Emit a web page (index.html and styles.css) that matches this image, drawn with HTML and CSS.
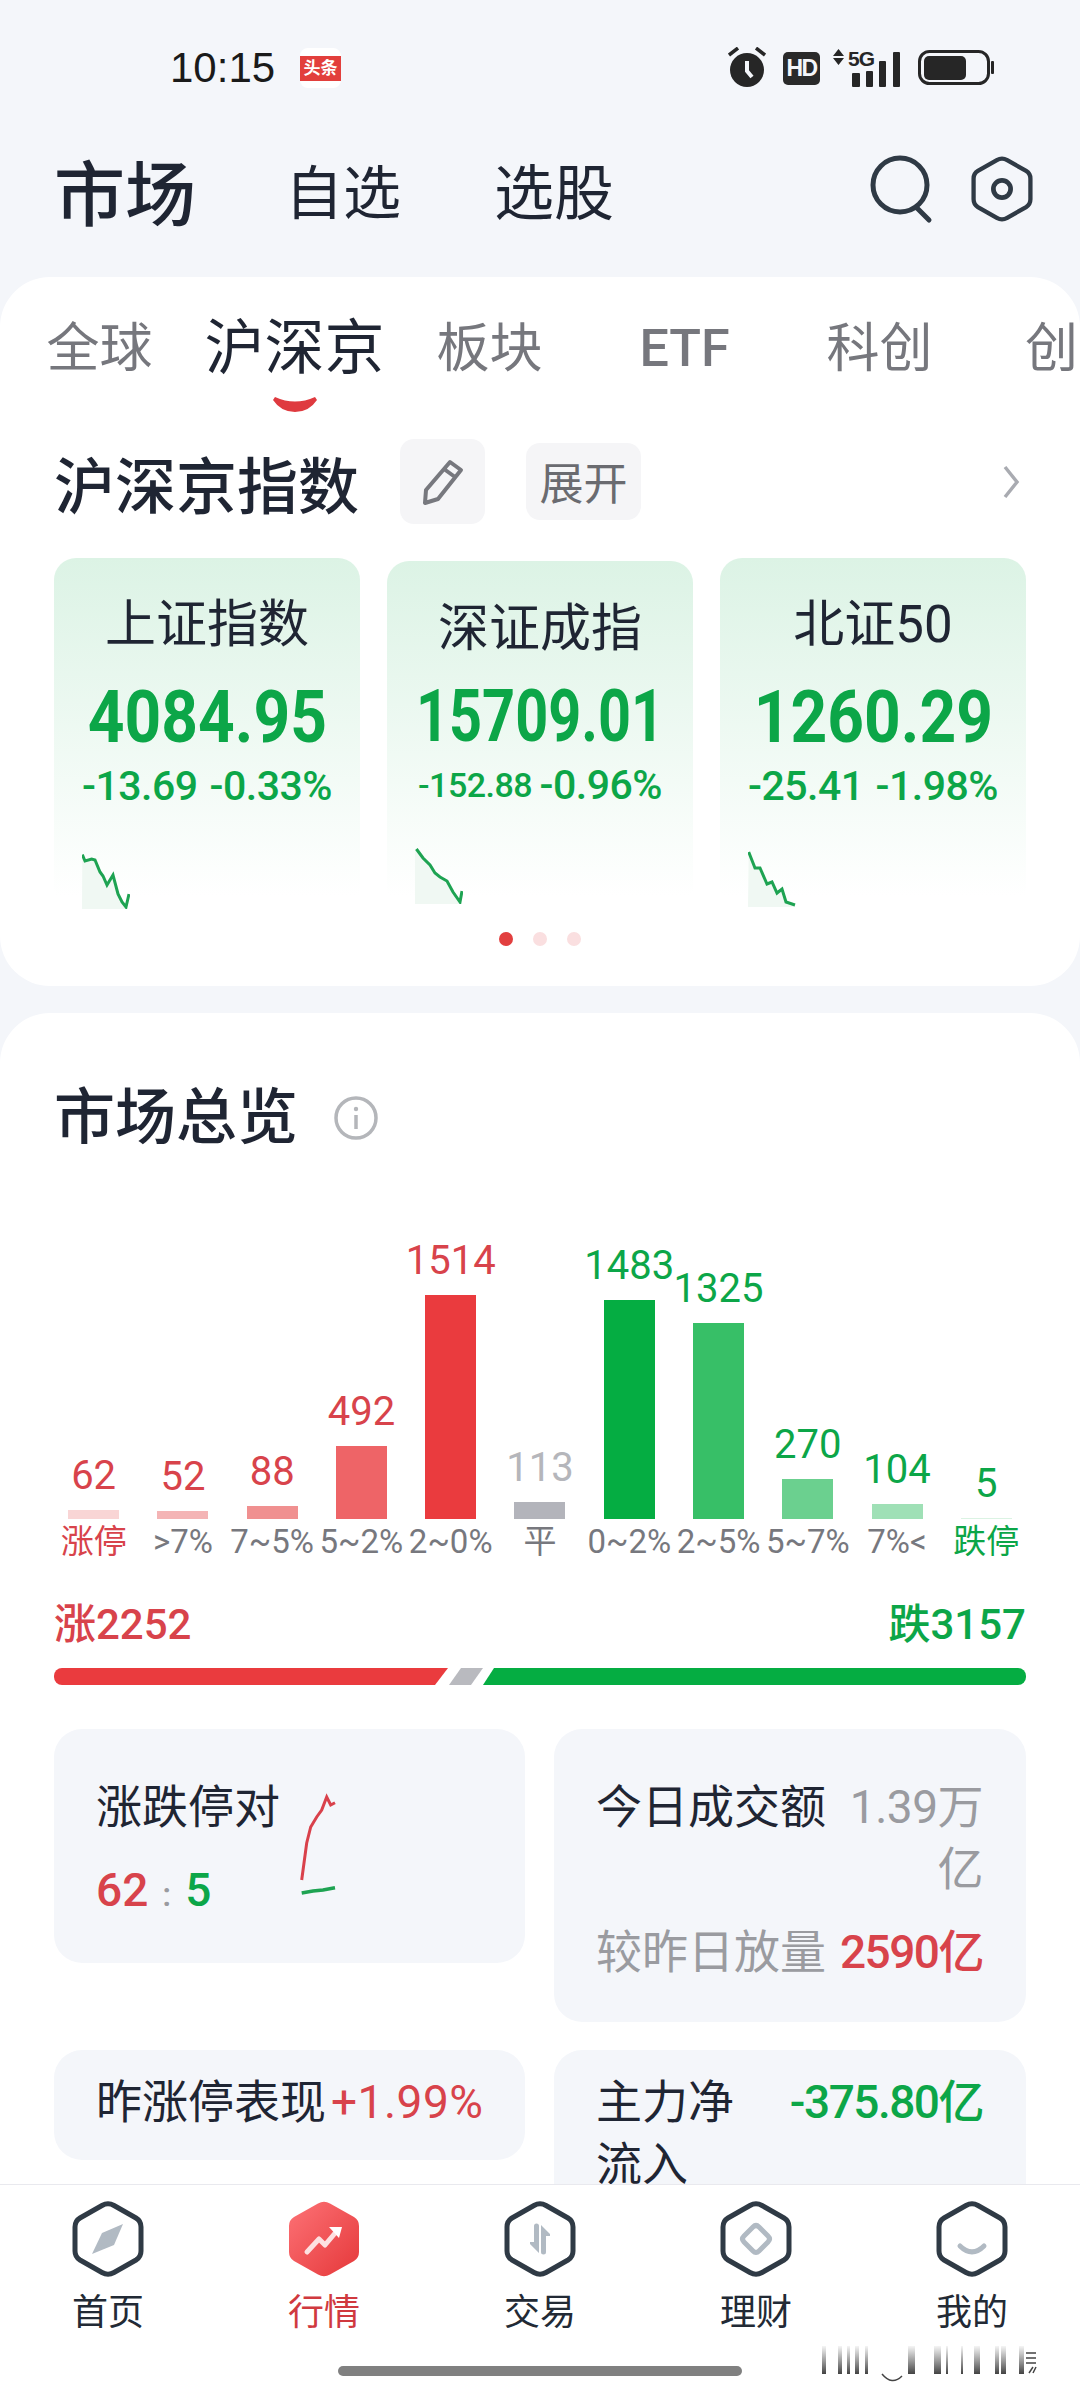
FILE: index.html
```html
<!DOCTYPE html>
<html lang="zh-CN">
<head>
    <meta charset="UTF-8">
    <meta name="viewport" content="width=device-width, initial-scale=1.0">
    <title>市场</title>
    <link rel="stylesheet" href="styles.css">
</head>
<body>
    <svg class="defs" width="0" height="0">
        <symbol id="hex" viewBox="0 0 72 78">
            <path d="M30 5.5Q36 2 42 5.5L64 18Q69 21 69 27V51Q69 57 64 60L42 72.5Q36 76 30 72.5L8 60Q3 57 3 51V27Q3 21 8 18Z" fill="none" stroke="#2f3a45" stroke-width="5"/>
        </symbol>
        <linearGradient id="hot" x1="0" y1="0" x2="1" y2="1">
            <stop offset="0" stop-color="#fd7276"/>
            <stop offset="1" stop-color="#e5383a"/>
        </linearGradient>
        <linearGradient id="fade" x1="0" y1="0" x2="0" y2="1">
            <stop offset="0" stop-color="#333" stop-opacity="0.05"/>
            <stop offset="1" stop-color="#222" stop-opacity="0.85"/>
        </linearGradient>
    </svg>

    <div class="page">
        <div class="scroll">
            <div class="status">
                <span class="time">10:15</span>
                <span class="toutiao"><span class="toutiao-mark">头条</span></span>
                <div class="status-icons">
                    <svg class="ic-alarm" width="38" height="40" viewBox="0 0 38 40">
                        <circle cx="19" cy="23" r="17" fill="#262626"/>
                        <path d="M19 14V24L24 30" fill="none" stroke="#f4f6fa" stroke-width="4"/>
                        <path d="M10 1L1 8M28 1L37 8" stroke="#262626" stroke-width="3.5"/>
                    </svg>
                    <span class="ic-hd">HD</span>
                    <svg class="ic-signal" width="67" height="38" viewBox="0 0 67 38">
                        <path d="M0 7L5.5 0L11 7ZM0 9H11L5.5 16Z" fill="#262626"/>
                        <text x="15" y="17" class="ic-5g">5G</text>
                        <rect x="19" y="24" width="8" height="14" rx="1" fill="#262626"/>
                        <rect x="33" y="22" width="7" height="16" rx="1" fill="#262626"/>
                        <rect x="46" y="12" width="7" height="26" rx="1" fill="#262626"/>
                        <rect x="60" y="3" width="7" height="35" rx="1" fill="#262626"/>
                    </svg>
                    <svg class="ic-battery" width="76" height="36" viewBox="0 0 76 36">
                        <rect x="1.5" y="1.5" width="69" height="32" rx="10" fill="none" stroke="#262626" stroke-width="3"/>
                        <rect x="6" y="6" width="42" height="24" rx="5" fill="#262626"/>
                        <rect x="73" y="11" width="3" height="13" rx="1" fill="#262626"/>
                    </svg>
                </div>
            </div>

            <div class="header">
                <span class="header-main">市场</span>
                <span class="header-link">自选</span>
                <span class="header-link header-link-last">选股</span>
                <svg class="ic-search" width="64" height="70" viewBox="0 0 64 70">
                    <circle cx="31" cy="31" r="27" fill="none" stroke="#2f3a45" stroke-width="5"/>
                    <path d="M47 53L60 66" stroke="#2f3a45" stroke-width="5" stroke-linecap="round"/>
                </svg>
                <svg class="ic-gear" width="62" height="68" viewBox="0 0 72 78">
                    <use href="#hex"/>
                    <circle cx="36" cy="39" r="10" fill="none" stroke="#2f3a45" stroke-width="5.5"/>
                </svg>
            </div>

            <div class="card card-index">
                <div class="tabs">
                    <div class="tab">全球</div>
                    <div class="tab tab-active">沪深京
                        <svg class="tab-smile" width="44" height="15" viewBox="0 0 44 15">
                            <path d="M2 0Q22 9 42 0L44 3Q36 15 22 15Q8 15 0 3Z" fill="#df3a3f"/>
                        </svg>
                    </div>
                    <div class="tab">板块</div>
                    <div class="tab tab-latin">ETF</div>
                    <div class="tab">科创</div>
                    <div class="tab tab-edge">创</div>
                </div>

                <div class="section-head">
                    <span class="section-title">沪深京指数</span>
                    <span class="btn-edit">
                        <svg width="46" height="48" viewBox="0 0 46 48">
                            <path d="M30 4L41 12L18 41L5 45L6 32Z M24 11L35 19" fill="none" stroke="#77787e" stroke-width="4" stroke-linejoin="round"/>
                        </svg>
                    </span>
                    <span class="btn-expand">展开</span>
                    <svg class="chevron" width="18" height="34" viewBox="0 0 18 34">
                        <path d="M3 2L15 17L3 32" fill="none" stroke="#a9abb1" stroke-width="3.5"/>
                    </svg>
                </div>

                <div class="index-row">
                    <div class="index-card">
                        <div class="index-name">上证指数</div>
                        <div class="index-value">4084.95</div>
                        <div class="index-change"><span>-13.69</span><span>-0.33%</span></div>
                        <svg class="index-spark" width="48" height="58" viewBox="0 0 48 58">
                            <path d="M0.3 3.7L3 10L9.7 8L13 9L18 21L21 25L25 34L31 24L36 43L40 51L44 56V58H0Z" fill="#f0f8f3"/>
                            <path d="M0.3 3.7L3 10L9.7 8L13 9L18 21L21 25L25 34L31 24L36 43L40 51L44 56L47 43" fill="none" stroke="#1ea352" stroke-width="3"/>
                        </svg>
                    </div>
                    <div class="index-card index-card-mid">
                        <div class="index-name">深证成指</div>
                        <div class="index-value">15709.01</div>
                        <div class="index-change index-change-sm"><span>-152.88</span><span>-0.96%</span></div>
                        <svg class="index-spark" width="48" height="56" viewBox="0 0 48 56">
                            <path d="M1.4 1L8 10L15 17L20 25L25 29L32 33L38 44L45 54V56H0V1Z" fill="#f0f8f3"/>
                            <path d="M1.4 1L8 10L15 17L20 25L25 29L32 33L38 44L45 54L47 43" fill="none" stroke="#1ea352" stroke-width="3"/>
                        </svg>
                    </div>
                    <div class="index-card">
                        <div class="index-name">北证50</div>
                        <div class="index-value">1260.29</div>
                        <div class="index-change"><span>-25.41</span><span>-1.98%</span></div>
                        <svg class="index-spark" width="48" height="56" viewBox="0 0 48 56">
                            <path d="M0.7 1L7 17L12 17L19 33L24 31L29 42L34 38L38 51L47 54V56H0Z" fill="#f0f8f3"/>
                            <path d="M0.7 1L7 17L12 17L19 33L24 31L29 42L34 38L38 51L47 54" fill="none" stroke="#1ea352" stroke-width="3"/>
                        </svg>
                    </div>
                </div>

                <div class="dots">
                    <span class="dot dot-on"></span>
                    <span class="dot"></span>
                    <span class="dot"></span>
                </div>
            </div>

            <div class="card card-market">
                <div class="market-head">
                    <span class="section-title">市场总览</span>
                    <svg class="ic-info" width="44" height="44" viewBox="0 0 44 44">
                        <circle cx="22" cy="22" r="20" fill="none" stroke="#b4b6ba" stroke-width="3.5"/>
                        <path d="M22 19V33" stroke="#b4b6ba" stroke-width="3.5"/>
                        <circle cx="22" cy="13" r="2.2" fill="#b4b6ba"/>
                    </svg>
                </div>

                <div class="chart">
                    <div class="col up"><span class="col-num">62</span><span class="bar bar-u1" style="height: 9px"></span><span class="col-label">涨停</span></div>
                    <div class="col up"><span class="col-num">52</span><span class="bar bar-u2" style="height: 8px"></span><span class="col-label col-label-gray">&gt;7%</span></div>
                    <div class="col up"><span class="col-num">88</span><span class="bar bar-u3" style="height: 13px"></span><span class="col-label col-label-gray">7~5%</span></div>
                    <div class="col up"><span class="col-num">492</span><span class="bar bar-u4" style="height: 73px"></span><span class="col-label col-label-gray">5~2%</span></div>
                    <div class="col up"><span class="col-num">1514</span><span class="bar bar-u5" style="height: 224px"></span><span class="col-label col-label-gray">2~0%</span></div>
                    <div class="col flat"><span class="col-num">113</span><span class="bar bar-flat" style="height: 17px"></span><span class="col-label col-label-gray">平</span></div>
                    <div class="col down"><span class="col-num">1483</span><span class="bar bar-d1" style="height: 219px"></span><span class="col-label col-label-gray">0~2%</span></div>
                    <div class="col down"><span class="col-num">1325</span><span class="bar bar-d2" style="height: 196px"></span><span class="col-label col-label-gray">2~5%</span></div>
                    <div class="col down"><span class="col-num">270</span><span class="bar bar-d3" style="height: 40px"></span><span class="col-label col-label-gray">5~7%</span></div>
                    <div class="col down"><span class="col-num">104</span><span class="bar bar-d4" style="height: 15px"></span><span class="col-label col-label-gray">7%&lt;</span></div>
                    <div class="col down"><span class="col-num">5</span><span class="bar bar-d5" style="height: 1px"></span><span class="col-label">跌停</span></div>
                </div>

                <div class="totals">
                    <span class="red">涨2252</span>
                    <span class="green">跌3157</span>
                </div>
                <div class="ratio">
                    <span class="ratio-up"></span>
                    <span class="ratio-flat"></span>
                    <span class="ratio-down"></span>
                </div>

                <div class="stats">
                    <div class="stat stat-limit">
                        <div class="stat-text">
                            <div class="stat-line">涨跌停对</div>
                            <div class="stat-line stat-line-gap stat-pair"><span class="red">62</span><span class="sep">:</span><span class="green">5</span></div>
                        </div>
                        <svg class="limit-spark" width="40" height="106" viewBox="0 0 40 106">
                            <path d="M3.7 90L6 73L8.7 53L12.7 37L18.7 27L23.7 20L28.7 7L32.7 15L37 12.7" fill="none" stroke="#d9414b" stroke-width="3"/>
                            <path d="M3.7 103L15 101L25 100L37 97.7" fill="none" stroke="#1ea352" stroke-width="3.5"/>
                        </svg>
                    </div>
                    <div class="stat">
                        <div class="stat-row">
                            <span class="stat-label stat-label-fixed">今日成交额</span>
                            <span class="stat-value gray">1.39万亿</span>
                        </div>
                        <div class="stat-row stat-line-gap">
                            <span class="stat-label stat-label-fixed gray">较昨日放量</span>
                            <span class="stat-value stat-strong red">2590亿</span>
                        </div>
                    </div>
                    <div class="stat stat-short">
                        <div class="stat-row">
                            <span class="stat-label stat-label-fixed">昨涨停表现</span>
                            <span class="stat-gain red">+1.99%</span>
                        </div>
                    </div>
                    <div class="stat stat-flow">
                        <div class="stat-row">
                            <span class="stat-label stat-label-wrap">主力净流入</span>
                            <span class="stat-value stat-strong green">-375.80亿</span>
                        </div>
                    </div>
                </div>
            </div>
        </div>

        <div class="nav">
            <div class="nav-items">
                <div class="nav-item">
                    <svg width="72" height="78" viewBox="0 0 72 78">
                        <use href="#hex"/>
                        <path d="M51 24L42 45L20 54L30 33Z" fill="#b1bac3"/>
                    </svg>
                    <span>首页</span>
                </div>
                <div class="nav-item nav-item-on">
                    <svg width="72" height="78" viewBox="0 0 72 78">
                        <path d="M30 3.5Q36 0 42 3.5L66 17Q71 20 71 26V52Q71 58 66 61L42 74.5Q36 78 30 74.5L6 61Q1 58 1 52V26Q1 20 6 17Z" fill="url(#hot)"/>
                        <path d="M19 52L31 39L37 45L48 32" fill="none" stroke="#fde1e1" stroke-width="5" stroke-linecap="round" stroke-linejoin="round"/>
                        <path d="M41 27H54L51 38Z" fill="#fff"/>
                    </svg>
                    <span>行情</span>
                </div>
                <div class="nav-item">
                    <svg width="72" height="78" viewBox="0 0 72 78">
                        <use href="#hex"/>
                        <path d="M30 26a2.5 2.5 0 0 1 5 0V53L26 44V42H30Z" fill="#b1bac3"/>
                        <path d="M42 52a2.5 2.5 0 0 1 -5 0V25L46 34V36H42Z" fill="#b1bac3"/>
                    </svg>
                    <span>交易</span>
                </div>
                <div class="nav-item">
                    <svg width="72" height="78" viewBox="0 0 72 78">
                        <use href="#hex"/>
                        <path d="M33 27Q36 24 39 27L48 36Q51 39 48 42L39 51Q36 54 33 51L24 42Q21 39 24 36Z" fill="none" stroke="#b1bac3" stroke-width="5"/>
                    </svg>
                    <span>理财</span>
                </div>
                <div class="nav-item">
                    <svg width="72" height="78" viewBox="0 0 72 78">
                        <use href="#hex"/>
                        <path d="M24 46Q36 58 48 46" fill="none" stroke="#b1bac3" stroke-width="5" stroke-linecap="round"/>
                    </svg>
                    <span>我的</span>
                </div>
            </div>
            <div class="home-bar"></div>

            <!-- watermark smear, bottom right -->
            <svg class="smear" width="220" height="36" viewBox="0 0 220 36">
                <g fill="url(#fade)">
                    <rect x="2" y="0" width="4" height="28"/>
                    <rect x="18" y="0" width="4" height="28"/>
                    <rect x="27" y="0" width="3" height="28"/>
                    <rect x="35" y="0" width="4" height="28"/>
                    <rect x="45" y="0" width="3" height="28"/>
                    <rect x="88" y="0" width="7" height="28"/>
                    <rect x="114" y="0" width="7" height="28"/>
                    <rect x="126" y="0" width="2" height="28"/>
                    <rect x="141" y="0" width="2" height="28"/>
                    <rect x="154" y="0" width="6" height="28"/>
                    <rect x="175" y="0" width="4" height="28"/>
                    <rect x="181" y="0" width="5" height="28"/>
                    <rect x="199" y="0" width="5" height="28"/>
                </g>
                <path d="M62 28Q72 40 82 30" fill="none" stroke="#444" stroke-width="1.5"/>
                <path d="M206 7H216M206 12H216M206 17H216M209 27L213 21M213 27L216 21" fill="none" stroke="#444" stroke-width="1.5"/>
            </svg>
        </div>
    </div>
</body>
</html>
```
FILE: styles.css
```css
:root {
    --bg: #f4f6fa;
    --ink: #1f2533;
    --tab-gray: #76777d;
    --red: #d8434b;
    --green: #0ca648;
    --soft: #9a9ba0;
}

* {
    box-sizing: border-box;
}

body {
    margin: 0;
    font-family: Roboto, "Noto Sans CJK SC", sans-serif;
    color: var(--ink);
    background: var(--bg);
}

.defs {
    display: block;
    height: 0;
}

.page {
    width: 1080px;
    height: 2400px;
    display: flex;
    flex-direction: column;
    overflow: hidden;
}

.scroll {
    flex: 1;
    min-height: 0;
    overflow: hidden;
}

.red { color: var(--red); }
.green { color: var(--green); }
.gray { color: var(--soft); }

/* status bar */
.status {
    height: 136px;
    padding-left: 170px;
    display: flex;
    align-items: center;
}

.time {
    font-size: 42px;
    color: #1a1a1a;
    font-family: "Liberation Sans", sans-serif;
}

.toutiao {
    width: 41px;
    height: 40px;
    margin-left: 25px;
    display: flex;
    align-items: center;
    background: #fff;
    border-radius: 8px;
}

.toutiao-mark {
    width: 41px;
    height: 25px;
    line-height: 25px;
    text-align: center;
    font-size: 17px;
    font-weight: 700;
    color: #fff;
    background: #e23f3c;
}

.status-icons {
    margin-left: 387px;
    display: flex;
    align-items: center;
}

.ic-alarm {
    margin-top: -2px;
}

.ic-hd {
    width: 37px;
    height: 33px;
    margin-left: 17px;
    border-radius: 5px;
    background: #2a2a2a;
    color: #f4f6fa;
    font-family: "Liberation Sans", sans-serif;
    font-weight: 700;
    font-size: 23px;
    letter-spacing: -1.5px;
    line-height: 33px;
    text-align: center;
}

.ic-signal {
    margin-left: 13px;
}

.ic-5g {
    font-family: "Liberation Sans", sans-serif;
    font-weight: 700;
    font-size: 21px;
    letter-spacing: -1px;
    fill: #262626;
}

.ic-battery {
    margin-left: 18px;
}

/* page header */
.header {
    height: 141px;
    padding: 0 47px 36px 54px;
    display: flex;
    align-items: center;
}

.header-main {
    font-size: 71px;
    font-weight: 500;
}

.header-link {
    font-size: 58px;
    margin-left: 89px;
}

.header-link-last {
    font-size: 60px;
    margin-left: 93px;
    margin-right: auto;
}

.ic-gear {
    margin-left: 38px;
}

/* cards */
.card {
    background: #fff;
    border-radius: 50px;
}

.card-index {
    height: 709px;
}

.tabs {
    height: 135px;
    padding: 36px 0 0 2px;
    display: flex;
    overflow: hidden;
}

.tab {
    flex: 0 0 195px;
    display: flex;
    flex-direction: column;
    align-items: center;
    font-size: 53px;
    line-height: 72px;
    color: var(--tab-gray);
}

.tab-active {
    font-size: 60px;
    color: var(--ink);
}

.tab-latin {
    font-weight: 500;
    font-size: 52px;
}

.tab-edge {
    flex: 0 0 101px;
    padding-left: 48px;
    align-items: flex-start;
}

.tab-smile {
    margin-top: 12px;
}

.section-head {
    height: 87px;
    margin-top: 26px;
    padding: 0 60px 0 54px;
    display: flex;
    align-items: center;
}

.section-title {
    font-size: 61px;
    font-weight: 500;
    line-height: 70px;
}

.section-head .section-title {
    margin-top: 12px;
}

.btn-edit {
    width: 85px;
    height: 85px;
    margin-left: 41px;
    display: flex;
    align-items: center;
    justify-content: center;
    background: #f5f5f7;
    border-radius: 14px;
}

.btn-expand {
    width: 115px;
    height: 77px;
    margin-left: 41px;
    background: #f5f5f7;
    border-radius: 14px;
    font-size: 44px;
    line-height: 84px;
    text-align: center;
    color: #6a6b70;
}

.chevron {
    margin-left: auto;
}

.index-row {
    margin-top: 33px;
    padding: 0 54px;
    display: flex;
    gap: 27px;
}

.index-card {
    width: 306px;
    height: 352px;
    padding-top: 36px;
    display: flex;
    flex-direction: column;
    align-items: center;
    border-radius: 22px;
    background: linear-gradient(#dcf3e5, #fff 96%);
}

.index-card-mid {
    height: 349px;
    margin-top: 3px;
    padding-top: 37px;
}

.index-name {
    font-size: 51px;
    line-height: 62px;
}

.index-value {
    margin-top: 22px;
    font-size: 72px;
    line-height: 80px;
    font-weight: 700;
    color: var(--green);
    transform: scaleX(0.89);
}

.index-card-mid .index-value {
    margin-top: 17px;
    transform: scaleX(0.8);
}

.index-change {
    height: 56px;
    width: 250px;
    display: flex;
    justify-content: space-between;
    font-size: 41px;
    font-weight: 500;
    line-height: 56px;
    letter-spacing: -0.5px;
    color: var(--green);
}

.index-change-sm {
    width: 244px;
}

.index-change-sm span:first-child {
    font-size: 34px;
}

.index-spark {
    margin-top: 37px;
    margin-left: 28px;
    align-self: flex-start;
}

.index-card-mid .index-spark {
    margin-top: 35px;
}

.dots {
    margin-top: 22px;
    display: flex;
    justify-content: center;
    gap: 20px;
}

.dot {
    width: 14px;
    height: 14px;
    border-radius: 50%;
    background: #fadfe0;
}

.dot-on {
    background: #e23f3f;
}

.card-market {
    margin-top: 27px;
    padding-top: 70px;
    height: 1300px;
}

.market-head {
    padding-left: 54px;
    display: flex;
    align-items: center;
}

.ic-info {
    margin-left: 36px;
}

/* bar chart */
.chart {
    height: 365px;
    margin-top: 47px;
    padding: 0 49px;
    display: grid;
    grid-template-columns: repeat(11, 1fr);
}

.col {
    display: flex;
    flex-direction: column;
    align-items: center;
    justify-content: flex-end;
    min-width: 0;
}

.col-num {
    font-size: 40px;
    line-height: 44px;
    margin-bottom: 12px;
    white-space: nowrap;
}

.col-label {
    font-size: 33px;
    line-height: 46px;
    white-space: nowrap;
}

.col-label-gray {
    color: #77787e;
}

.up { color: var(--red); }
.down { color: var(--green); }
.flat .col-num { color: #b5b6bb; }

.bar { width: 51px; display: block; }
.bar-u1 { background: #f9d5d5; }
.bar-u2 { background: #f4b4b5; }
.bar-u3 { background: #f09090; }
.bar-u4 { background: #ee6467; }
.bar-u5 { background: #ea3b3e; }
.bar-flat { background: #b3b4bb; }
.bar-d1 { background: #05ad42; }
.bar-d2 { background: #37bf67; }
.bar-d3 { background: #6bd08f; }
.bar-d4 { background: #9fe0b6; }
.bar-d5 { background: #dbf3e3; }

.totals {
    margin-top: 30px;
    padding: 0 54px;
    display: flex;
    justify-content: space-between;
    font-size: 42px;
    font-weight: 500;
    line-height: 60px;
}

.ratio {
    height: 17px;
    margin: 13px 54px 0;
    display: flex;
}

.ratio-up {
    width: 394px;
    background: #ea3b3e;
    border-radius: 8px 0 0 8px;
    clip-path: polygon(0 0, 100% 0, 381px 100%, 0 100%);
}

.ratio-flat {
    width: 34px;
    margin-left: 1px;
    background: #b9babf;
    clip-path: polygon(12px 0, 100% 0, 22px 100%, 0 100%);
}

.ratio-down {
    flex: 1;
    background: #05ad42;
    border-radius: 0 8px 8px 0;
    clip-path: polygon(11px 0, 100% 0, 100% 100%, 0 100%);
}

/* stat cards */
.stats {
    margin-top: 44px;
    padding: 0 54px;
    display: grid;
    grid-template-columns: 471px 472px;
    column-gap: 29px;
    row-gap: 28px;
    align-items: start;
}

.stat {
    padding: 47px 43px 39px 42px;
    background: var(--bg);
    border-radius: 28px;
    font-size: 46px;
    line-height: 62px;
}

.stat-limit {
    display: flex;
    padding-bottom: 38px;
}

.stat-text {
    width: 185px;
    white-space: nowrap;
}

.stat-line-gap {
    margin-top: 21px;
}

.stat-pair {
    font-weight: 500;
}

.sep {
    margin: 0 14px;
    color: var(--soft);
    font-size: 34px;
}

.limit-spark {
    margin: 14px 0 0 17px;
}

.stat-row {
    display: flex;
}

.stat-label-fixed {
    flex: none;
    white-space: nowrap;
}

.stat-label-wrap {
    flex: 0 0 140px;
}

.stat-value {
    flex: 1;
    min-width: 0;
    padding-left: 12px;
    text-align: right;
    letter-spacing: -0.5px;
}

.stat-strong {
    padding-left: 0;
    font-weight: 500;
    letter-spacing: -1.5px;
    white-space: nowrap;
}

.stat-gain {
    margin-left: 5px;
    white-space: nowrap;
    letter-spacing: 0.5px;
}

.stat-short {
    padding-top: 21px;
    padding-bottom: 27px;
}

.stat-flow {
    padding-top: 21px;
    height: 240px;
}

/* bottom nav */
.nav {
    position: relative;
    flex: 0 0 216px;
    padding-top: 15px;
    background: #fff;
    border-top: 1px solid #e9e9ee;
}

.nav-items {
    display: grid;
    grid-template-columns: repeat(5, 1fr);
}

.nav-item {
    display: flex;
    flex-direction: column;
    align-items: center;
    font-size: 36px;
    line-height: 50px;
    color: #222a35;
}

.nav-item span {
    margin-top: 10px;
}

.nav-item-on {
    color: #d0393f;
}

.home-bar {
    width: 404px;
    height: 10px;
    margin: 28px auto 0;
    background: #808080;
    border-radius: 5px;
}

.smear {
    position: absolute;
    left: 820px;
    top: 161px;
}
```
